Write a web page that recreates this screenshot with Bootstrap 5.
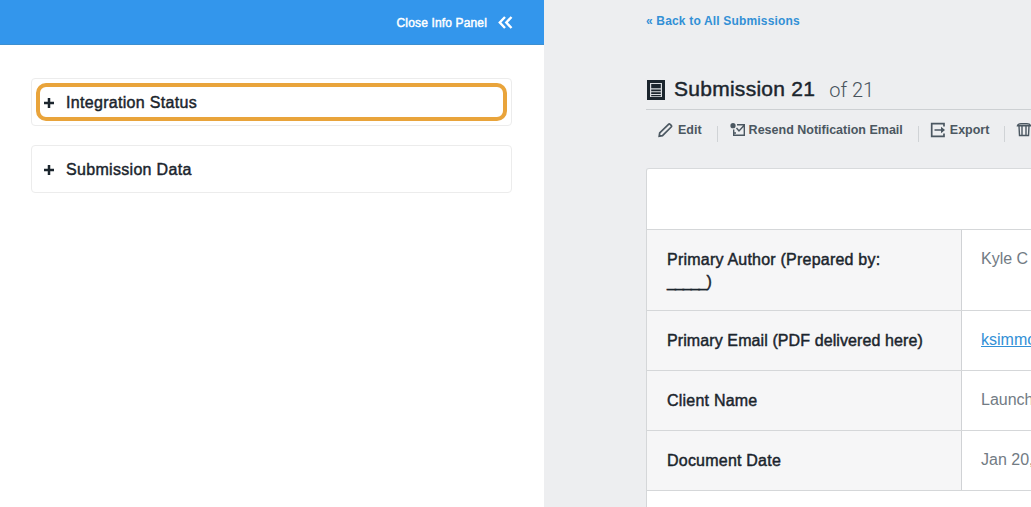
<!DOCTYPE html>
<html lang="en">
<head>
  <meta charset="UTF-8">
  <meta name="viewport" content="width=device-width, initial-scale=1">
  <title>Submission 21</title>
  <link href="https://cdn.jsdelivr.net/npm/bootstrap@5.3.2/dist/css/bootstrap.min.css" rel="stylesheet">
  <style>
    body { font-family: "Liberation Sans", Arial, sans-serif; background: #edeef0; color: #1b252d; }
    .page { height: 100vh; }
    .medium { -webkit-text-stroke: 0.45px currentColor; }

    /* info panel */
    .info-panel { width: 544px; }
    .info-header { height: 45px; padding: 1px 31px 0 0; background: #3396ec; border-bottom: 1px solid #3d8fd0; font-size: 12px; letter-spacing: 0.15px; gap: 11px; }
    .info-body { padding: 33px 32px 0 31px; gap: 19px; }
    .info-box { height: 48px; border: 1px solid #ececec; border-radius: 4px; padding: 4px; font-size: 16px; letter-spacing: 0.31px; }
    .info-toggle { height: 38px; border: 4px solid transparent; border-radius: 10px; padding: 1px 0 0 4px; gap: 12px; }
    .info-toggle.selected { border-color: #e9a43b; }

    /* submission */
    .submission { width: 487px; padding-left: 102px; }
    .back-link { padding-top: 13px; height: 75px; font-size: 12px; line-height: 17px; letter-spacing: 0.17px; color: #3290d6; }
    .title-bar { height: 35px; border-bottom: 1px solid #cdd0d3; }
    .title-bar h1 { font-size: 21px; line-height: 28px; letter-spacing: 0.27px; padding-left: 1px; }
    .title-count { font-family: Roboto, "Liberation Sans", sans-serif; font-weight: 300; font-size: 20px; line-height: 28px; padding: 1px 0 0 14px; color: #48535c; }
    .actions { height: 58px; font-size: 12.5px; line-height: 18px; color: #4b5761; padding: 11px 0 0 12px; }
    .actions > * { flex-shrink: 0; }
    .actions .divider { width: 1px; height: 16px; margin: 5px 0 0 15px; background: #d0d3d6; }
    .action-label { margin-left: 5px; }
    .entry { width: 560px; border-left: 1px solid #d5d7d9; border-top: 1px solid #d8dadc; border-top-left-radius: 3px; }
    .entry-head { height: 60px; }
    .entry-row { height: 60px; border-top: 1px solid #d5d7d9; }
    .entry-row.tall { height: 81px; }
    .entry-label { width: 315px; background: #f6f6f7; border-right: 1px solid #d0d2d5; padding: 19px 60px 0 20px; font-size: 16px; line-height: 22px; letter-spacing: 0.22px; }
    .entry-label.wide { padding-right: 0; letter-spacing: 0.1px; }
    .blank { letter-spacing: -1px; }
    .entry-value { padding: 18px 0 0 19px; font-size: 16px; line-height: 22px; color: #727b84; }
    .entry-value a { color: #3290d6; }
  </style>
</head>
<body class="overflow-hidden">
  <div class="page d-flex overflow-hidden">

    <!-- Info panel -->
    <aside class="info-panel flex-shrink-0 bg-white">
      <div class="info-header d-flex align-items-center justify-content-end text-white">
        <span class="medium">Close Info Panel</span>
        <svg width="15" height="13" viewBox="0 0 15 13" fill="none" stroke="currentColor" stroke-width="2.4"><path d="M7 1 1.800 6.500 7 12M13.500 1 8.300 6.500l5.200 5.500"/></svg>
      </div>
      <div class="info-body d-flex flex-column">
        <div class="info-box">
          <div class="info-toggle selected d-flex align-items-center">
            <svg width="10" height="10" viewBox="0 0 10 10" stroke="currentColor" stroke-width="2.5"><path d="M5 0v10M0 5h10"/></svg>
            <span class="medium">Integration Status</span>
          </div>
        </div>
        <div class="info-box">
          <div class="info-toggle d-flex align-items-center">
            <svg width="10" height="10" viewBox="0 0 10 10" stroke="currentColor" stroke-width="2.5"><path d="M5 0v10M0 5h10"/></svg>
            <span class="medium">Submission Data</span>
          </div>
        </div>
      </div>
    </aside>

    <!-- Submission -->
    <main class="submission flex-shrink-0 overflow-hidden">
      <div class="back-link fw-bold">« Back to All Submissions</div>
      <div class="title-bar d-flex">
        <svg class="mt-1 flex-shrink-0" width="19" height="22" viewBox="0 0 19 22"><path fill="#1b252d" d="M1 1h18v20H1z"/><path fill="#d9dcdf" d="M4 4h12v14H4z"/><path fill="#1b252d" d="M5.200 5h9.600v4.200H5.200zM5.200 10.500h9.600v1.800H5.200zM5.200 13.200h9.600V15H5.200zM5.200 16h9.600v1.200H5.200z"/></svg>
        <h1 class="medium mb-0 ms-2">Submission 21</h1>
        <span class="title-count">of 21</span>
      </div>
      <div class="actions d-flex fw-bold text-nowrap">
        <svg width="15" height="18" viewBox="0 0 15 18" fill="none" stroke="currentColor" stroke-width="1.700"><path d="M1.200 15.200 1.700 12 10.500 3.300Q11.300 2.500 12.100 3.300L13.200 4.400Q14 5.200 13.200 6L4.500 14.700Z"/></svg>
        <span class="action-label">Edit</span>
        <span class="divider"></span>
        <svg width="27" height="18" viewBox="0 0 27 18" fill="none" stroke="currentColor" stroke-width="1.400"><path d="M19 3.700h7.300v10.600H15.700V8.500M18.500 7l2.500 3 5-5.500M16 12h2"/><circle cx="15" cy="4.700" r="2.600" fill="currentColor" stroke="none"/></svg>
        <span class="action-label ms-1">Resend Notification Email</span>
        <span class="divider"></span>
        <svg width="26" height="18" viewBox="0 0 26 18" fill="none" stroke="currentColor" stroke-width="1.700"><path d="M25 5.500V2.700H12.700v12.600H25v-2.800M15.500 9h9"/><path fill="currentColor" stroke="none" d="M22 5.800l4 3.200-4 3.200z"/></svg>
        <span class="action-label">Export</span>
        <span class="divider"></span>
        <svg width="28" height="18" viewBox="0 0 28 18" fill="none" stroke="currentColor" stroke-width="1.400"><path d="M12.500 4.700Q13 2.700 16 2.700H22Q25 2.700 25.500 4.700ZM14 5l.5 9.500h9L24 5M17 5v9.500M21 5v9.500"/></svg>
      </div>

      <div class="entry bg-white">
        <div class="entry-head"></div>
        <div class="entry-row tall d-flex">
          <div class="entry-label medium">Primary Author (Prepared by: <span class="blank">_____</span>)</div>
          <div class="entry-value">Kyle C</div>
        </div>
        <div class="entry-row d-flex">
          <div class="entry-label wide medium">Primary Email (PDF delivered here)</div>
          <div class="entry-value"><a href="#">ksimmo</a></div>
        </div>
        <div class="entry-row d-flex">
          <div class="entry-label medium">Client Name</div>
          <div class="entry-value">Launch</div>
        </div>
        <div class="entry-row d-flex">
          <div class="entry-label medium">Document Date</div>
          <div class="entry-value">Jan 20,</div>
        </div>
        <div class="entry-row"></div>
      </div>
    </main>
  </div>
  <script src="https://cdn.jsdelivr.net/npm/bootstrap@5.3.2/dist/js/bootstrap.bundle.min.js"></script>
</body>
</html>
